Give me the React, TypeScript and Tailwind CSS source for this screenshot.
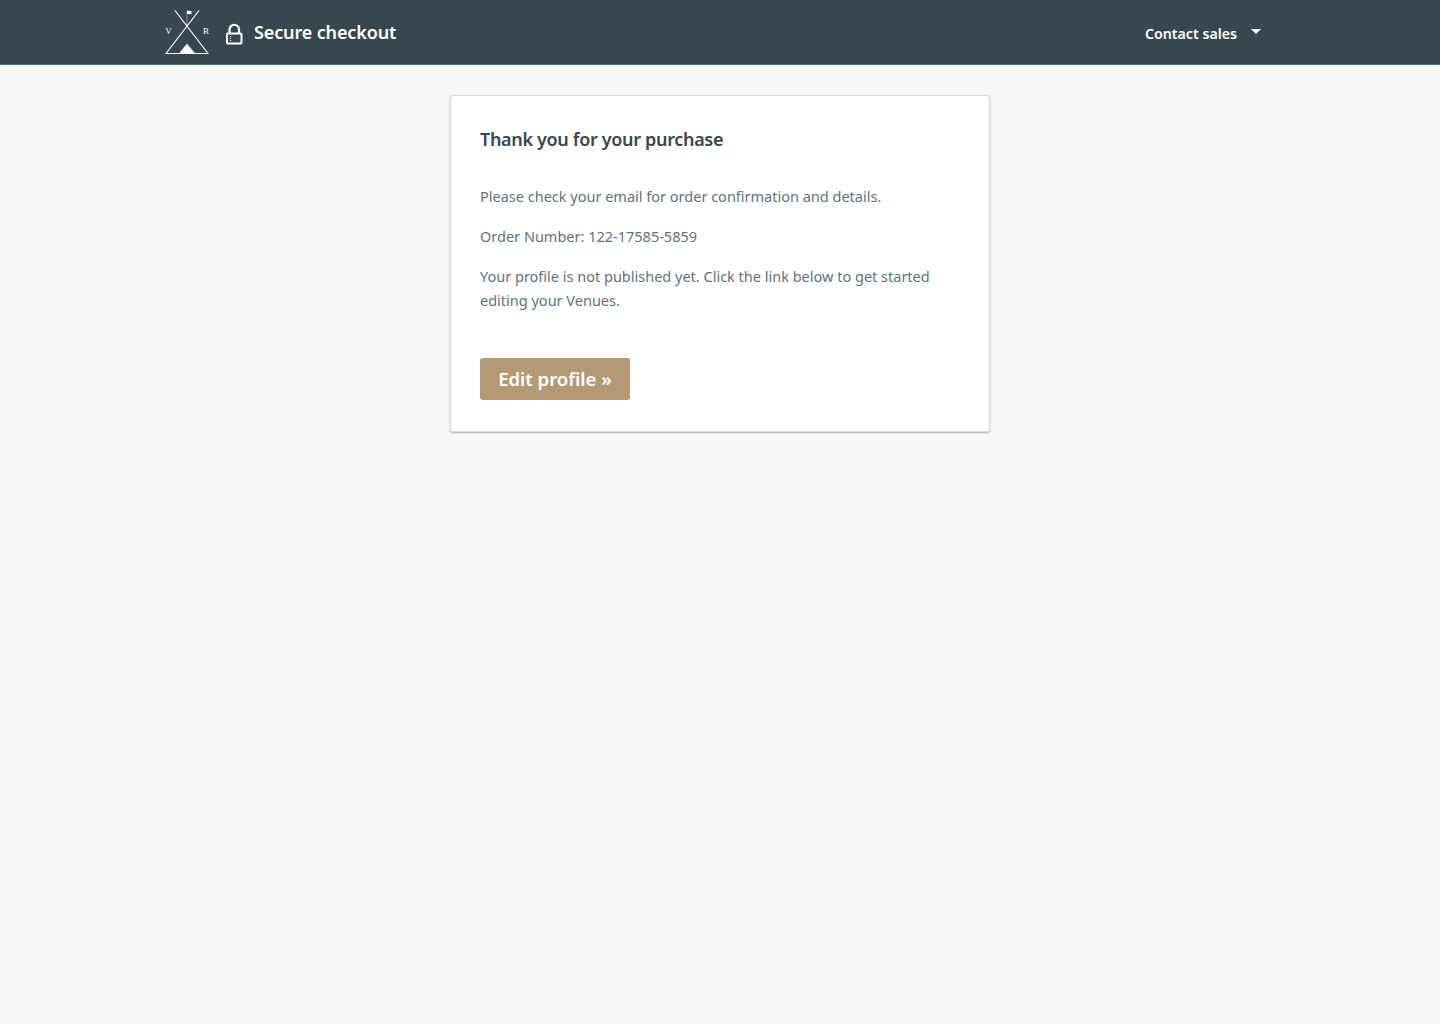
function Logo() {
  return (
    <svg width="44" height="44" viewBox="0 0 44 44" className="text-white shrink-0">
      <g stroke="currentColor" fill="none">
        <path d="M1 43.5 L34 0.5" strokeWidth="1.2" />
        <path d="M43 43.5 L10 0.5" strokeWidth="1.2" />
        <path d="M0.5 43.5 H43.5" strokeWidth="1" />
        <path d="M22 16 V1" strokeWidth="0.7" opacity="0.6" />
      </g>
      <path d="M22 0.5 L28 1.4 L25.5 2.6 L27.5 4 L22 4 Z" fill="currentColor" />
      <path d="M22 33.5 L30 43.5 H14 Z" fill="currentColor" />
      <text x="3.5" y="24" textAnchor="middle" fontSize="9" fill="currentColor" fontFamily="Liberation Serif, serif">V</text>
      <text x="41" y="24" textAnchor="middle" fontSize="9" fill="currentColor" fontFamily="Liberation Serif, serif">R</text>
    </svg>
  );
}

function Lock() {
  return (
    <svg width="18" height="22" viewBox="0 0 18 22" className="text-white shrink-0">
      <path d="M4.5 11 V6.5 a4.75 4.75 0 0 1 9.5 0 V11" fill="none" stroke="currentColor" strokeWidth="2.2" />
      <rect x="2" y="10.5" width="14.5" height="10" rx="1" fill="none" stroke="currentColor" strokeWidth="2" />
      <path d="M5.5 13 v1 M5.5 15 v1 M5.5 17 v1" stroke="currentColor" strokeWidth="1.2" />
    </svg>
  );
}

export default function App() {
  return (
    <div className="min-h-[1024px] bg-[#f8f8f8] font-['Noto_Sans',sans-serif]">
      {/* Header */}
      <header className="h-[65px] bg-[#37474f] border-b border-[#5a6b76]">
        <div className="max-w-[1140px] mx-auto px-[15px] h-full flex items-center justify-between">
          <div className="flex items-center">
            <Logo />
            <div className="ml-4 mt-1"><Lock /></div>
            <span className="ml-[11px] text-[18px] font-semibold text-white tracking-[-0.13px]">Secure checkout</span>
          </div>
          <button className="flex items-center text-white text-[14.2px] font-semibold mr-[14px] mt-1">
            Contact sales
            <span className="ml-[14px] mb-1 w-0 h-0 border-x-[5px] border-x-transparent border-t-[5px] border-t-white" />
          </button>
        </div>
      </header>

      {/* Card */}
      <main className="pt-[30px] flex justify-center">
        <div className="w-[540px] h-[337px] bg-white border border-[#dcdcdc] rounded-[3px] shadow-[0_1px_2px_rgba(0,0,0,0.3)] px-[29px] pt-[29px]">
          <h1 className="text-[18px] font-semibold text-[#37474f] leading-[28px] tracking-[-0.33px]">Thank you for your purchase</h1>
          <div className="mt-[31px] text-[14.5px] text-[#5c7480] leading-6 space-y-4">
            <p>Please check your email for order confirmation and details.</p>
            <p>Order Number: 122-17585-5859</p>
            <p>Your profile is not published yet. Click the link below to get started editing your Venues.</p>
          </div>
          <button className="mt-[46px] w-[150px] h-[42px] bg-[#b39a74] rounded-[3px] text-white text-[18.5px] font-semibold">
            Edit profile »
          </button>
        </div>
      </main>
    </div>
  );
}
